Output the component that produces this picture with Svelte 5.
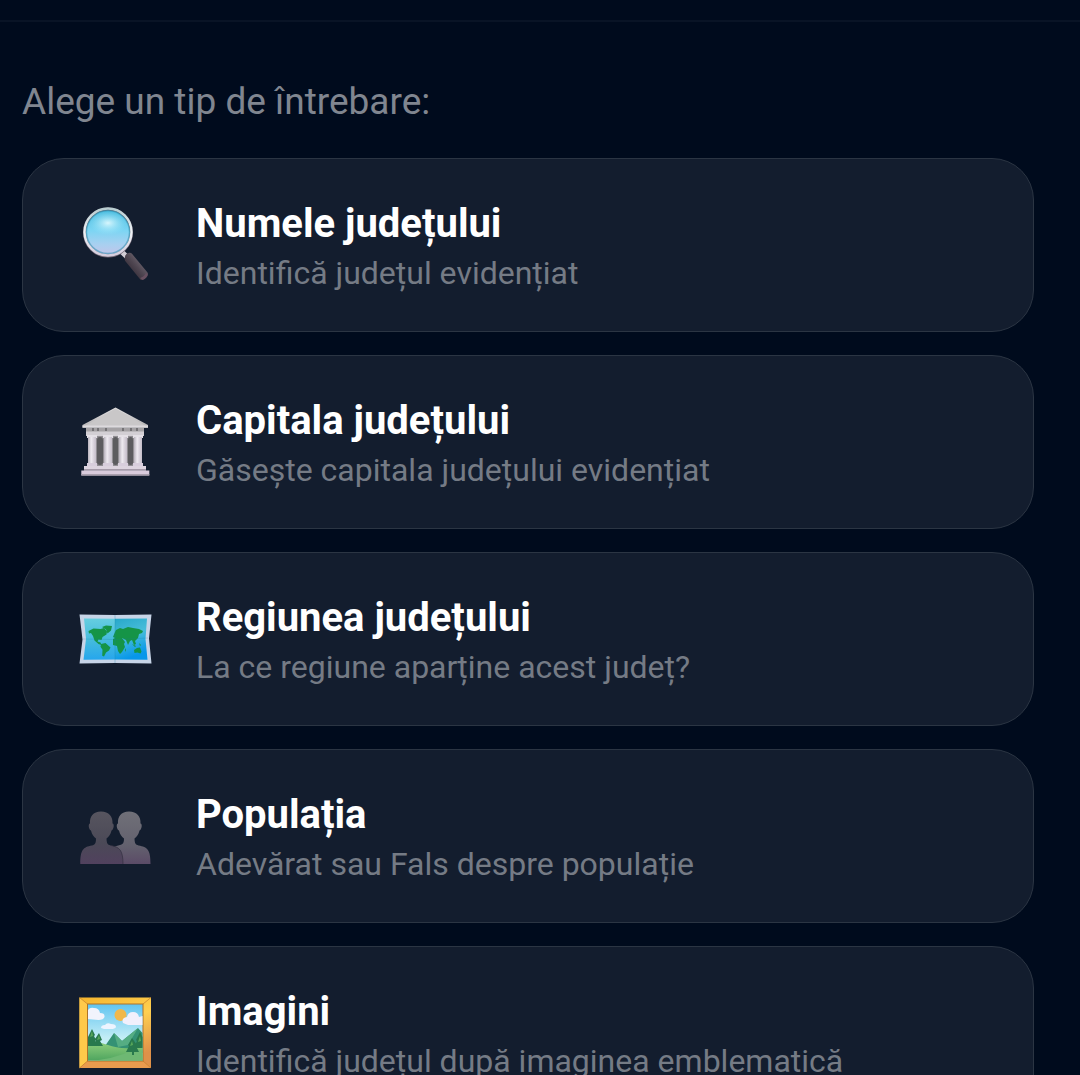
<script>
    // Question types, in the order they are offered
    const questionTypes = [
        { id: 'name', title: 'Numele județului', hint: 'Identifică județul evidențiat' },
        { id: 'capital', title: 'Capitala județului', hint: 'Găsește capitala județului evidențiat' },
        { id: 'region', title: 'Regiunea județului', hint: 'La ce regiune aparține acest județ?' },
        { id: 'population', title: 'Populația', hint: 'Adevărat sau Fals despre populație' },
        { id: 'images', title: 'Imagini', hint: 'Identifică județul după imaginea emblematică' }
    ];

    let selected = $state(null);

    // Left edges of the museum columns
    const columns = [9, 25, 40, 55];
</script>

<svelte:head>
    <title>Alege un tip de întrebare</title>
</svelte:head>

<header class="top-bar"></header>

<main class="picker">
    <h1>Alege un tip de întrebare:</h1>

    <div class="options">
        {#each questionTypes as type (type.id)}
            <button class="option" type="button" onclick={() => (selected = type.id)}>
                <svg class="icon" viewBox="0 0 72 72" aria-hidden="true">
                    {#if type.id === 'name'}
                        <defs>
                            <linearGradient id="lens" x1="0" y1="0" x2="0" y2="1">
                                <stop offset="0" stop-color="#45b9dc" />
                                <stop offset="0.45" stop-color="#7bd5f3" />
                                <stop offset="0.75" stop-color="#a8d0f0" />
                                <stop offset="1" stop-color="#c6c3e8" />
                            </linearGradient>
                            <radialGradient id="shine">
                                <stop offset="0" stop-color="#e4fbff" stop-opacity="0.9" />
                                <stop offset="1" stop-color="#9be6fa" stop-opacity="0" />
                            </radialGradient>
                            <linearGradient id="rim" x1="0" y1="0" x2="0" y2="1">
                                <stop offset="0" stop-color="#b9cdd0" />
                                <stop offset="0.5" stop-color="#eef3f7" />
                                <stop offset="1" stop-color="#d5cddd" />
                            </linearGradient>
                            <linearGradient id="handle" x1="0" y1="1" x2="1" y2="0">
                                <stop offset="0.2" stop-color="#302833" />
                                <stop offset="0.5" stop-color="#4f4651" />
                                <stop offset="0.8" stop-color="#746c76" />
                            </linearGradient>
                        </defs>
                        <path d="M43 43l5 5" stroke="#d1ccd4" stroke-width="5" />
                        <path d="M46 48q0-3 4-4.200q2-.3 3 1L68.500 63.500q1.500 2.500-1.500 5.300t-5.500 2L47 53q-2-2-1-5z" fill="url(#handle)" />
                        <path d="M61 69q4-1 6-5l1.500 1q0 4-5 6z" fill="#685061" />
                        <circle cx="29" cy="23.500" r="23.500" fill="url(#lens)" stroke="#746977" stroke-width="3" />
                        <circle cx="29" cy="23" r="23.500" fill="none" stroke="url(#rim)" stroke-width="2.400" />
                        <circle cx="29" cy="23" r="21.500" fill="none" stroke="#2b8ba9" stroke-opacity="0.55" stroke-width="1.300" />
                        <ellipse cx="29" cy="14" rx="19" ry="12" fill="url(#shine)" />
                    {:else if type.id === 'capital'}
                        <defs>
                            <linearGradient id="roof" x1="0" y1="0" x2="0" y2="1">
                                <stop offset="0" stop-color="#e1dfe0" />
                                <stop offset="1" stop-color="#b5b3b4" />
                            </linearGradient>
                            <linearGradient id="column">
                                <stop offset="0" stop-color="#b8b2bc" />
                                <stop offset="0.4" stop-color="#eeeaf0" />
                                <stop offset="1" stop-color="#c5bdc9" />
                            </linearGradient>
                        </defs>
                        <path d="M9 29h54v31H9z" fill="#918e93" />
                        <g fill="#5d5c5f">
                            <rect x="18" y="31" width="6" height="28" rx="3" />
                            <rect x="34" y="31" width="5" height="28" rx="2.500" />
                            <rect x="49" y="31" width="5" height="28" rx="2.500" />
                        </g>
                        <path d="M36.500 1.500L69 19v2.500H3.500V19z" fill="url(#roof)" />
                        <path d="M36.500 2.500L67 20H6z" fill="#c9c7c8" />
                        <path d="M3.500 19.500h65.500v2.300H3.500z" fill="#dddadd" />
                        <path d="M7 22h58v4H7z" fill="#a5a2a5" />
                        <path d="M13 22h2v3h-2zM18 22h2v3h-2zM26 22h2v3h-2zM43 22h2v3h-2zM51 22h2v3h-2zM57 22h2v3h-2z" fill="#747275" />
                        <path d="M7 25.500h58V30H7z" fill="#d3cfd4" />
                        {#each columns as x}
                            <rect x={x - 1} y="29" width="10" height="3" fill="#e4e0e6" />
                            <rect {x} y="31" width="8" height="27" fill="url(#column)" />
                            <rect x={x - 1} y="57" width="10" height="3" fill="#d8cedc" />
                        {/each}
                        <path d="M5 60h62v4.500H5z" fill="#ddd4df" />
                        <path d="M5 63h62v1.500H5z" fill="#a69ba9" />
                        <path d="M2.300 64.500h68v5h-68z" fill="#d9cbdc" />
                        <path d="M2.300 68h68v1.500h-68z" fill="#aaa0ae" />
                    {:else if type.id === 'region'}
                        <defs>
                            <linearGradient id="sea-left" x1="0" y1="0" x2="0" y2="1">
                                <stop offset="0" stop-color="#66cee0" />
                                <stop offset="0.55" stop-color="#43badd" />
                                <stop offset="1" stop-color="#26a6ed" />
                            </linearGradient>
                            <linearGradient id="sea-right" x1="0" y1="0" x2="0.3" y2="1">
                                <stop offset="0" stop-color="#27a8ca" />
                                <stop offset="0.5" stop-color="#48bdda" />
                                <stop offset="1" stop-color="#0797ea" />
                            </linearGradient>
                        </defs>
                        <g transform="translate(0 -2)">
                            <path d="M.5 13.500L36 14l36.500-.5-2.500 24 2.500 25-36.500-.5-35.500.5 3-24z" fill="#c7d4e7" />
                            <path d="M5 17.500l31 .3V58.500l-31.500.2L7 38z" fill="url(#sea-left)" />
                            <path d="M36 17.800l32-.3L66.500 38l2 20.700-32.500-.2z" fill="url(#sea-right)" />
                            <g fill="#159447">
                                <path d="M9.500 30l5-2.500 7 .5 3.500-1 3 3.500-.5 3-4 2.500-1 3-3-.5-1 2 3 1 1 2.500-3-1-4-3.500-1.500-4.500-2-3-2 .5z" />
                                <path d="M22 43l4.500-1 5 4.500-1.500 3-3 2-2 4-1.800-.8.3-6-2-3z" />
                                <path d="M23 26l4-1.500 6 .5-1 4.500-3.500 3-1.500-4z" />
                                <path d="M36 31l1-2 4-2 3 1 5-2 5 1 6 1 4 2-1 2-3 1-1 4-3 3 1 3-2 1-2-5-2 1-2 4-2-5-4-2-2 2-2-2-3 0-2-1z" />
                                <path d="M34 38l4-2 5 1 3 4-1 2 1 3-3 5-2 2-2-3-1-5-4-1z" />
                                <path d="M55 49l3-2 3-.5 1.500 4-1 2-3-1-3 .5zM53 43l4 2-1 1zM60 42l2 2-1 1zM46 47l1 2-1 2z" />
                            </g>
                            <path d="M4 38l32 .5L69 37" fill="none" stroke="#18789c" stroke-opacity="0.2" />
                            <path d="M36 14v48" stroke="#147fa6" stroke-opacity="0.3" />
                        </g>
                    {:else if type.id === 'population'}
                        <defs>
                            <linearGradient id="person-back" x1="0" y1="0" x2="0" y2="1">
                                <stop offset="0" stop-color="#707078" />
                                <stop offset="0.65" stop-color="#63616e" />
                                <stop offset="1" stop-color="#5b4b67" />
                            </linearGradient>
                            <linearGradient id="person-front" x1="0" y1="0" x2="0" y2="1">
                                <stop offset="0" stop-color="#57555f" />
                                <stop offset="0.6" stop-color="#4b4957" />
                                <stop offset="1" stop-color="#51415e" />
                            </linearGradient>
                        </defs>
                        <path d="M50 11.500c8 0 12 5 11.500 12 2 0 1.500 6-1 7-1 4-2.500 6-5 8 .2 5 1 6 4 7 9 1.500 12 4 12 18.500H33V49q2-3 8-4c3-.8 4-2 4-6.500-2.500-2-4-4-5-8-2.500-1-3-7-1-7-.5-7 3-12 11-12z" fill="url(#person-back)" />
                        <path d="M22 11.500c8 0 12 5 11.500 12 2 0 1.500 6-1 7-1 4-2.500 6-5 8 .2 5 1 6 4 7 9 1.500 12.500 4 12.500 18.500H1.300C1.300 50 4 47 13 45.500c3-.8 4-2 4-7-2.500-2-4-4-5-8-2.500-1-3-7-1-7-.5-7 3-12 11-12z" fill="url(#person-front)" />
                        <path d="M32 45.500c8.500 1.700 12 4.500 12 18.500" fill="none" stroke="#302c3d" stroke-opacity="0.65" />
                    {:else}
                        <defs>
                            <linearGradient id="frame" x1="0" y1="0" x2="0.4" y2="1">
                                <stop offset="0" stop-color="#f5b52d" />
                                <stop offset="0.5" stop-color="#ffcf50" />
                                <stop offset="1" stop-color="#df9149" />
                            </linearGradient>
                            <linearGradient id="sky" x1="0" y1="0" x2="0" y2="1">
                                <stop offset="0" stop-color="#62c5f0" />
                                <stop offset="0.6" stop-color="#c3edf6" />
                            </linearGradient>
                            <linearGradient id="meadow" x1="0" y1="0" x2="0" y2="1">
                                <stop offset="0" stop-color="#8dce7b" />
                                <stop offset="1" stop-color="#4fa55f" />
                            </linearGradient>
                        </defs>
                        <rect x=".5" y=".5" width="71.500" height="70.500" fill="url(#frame)" />
                        <path d="M.5.5L8.500 7v57L.5 71z" fill="#ffc94a" />
                        <path d="M.5 71l8-7H64l8 7z" fill="#e99b4e" />
                        <path d="M.5.5l8 6.500M72 .5L64 7M.5 71l8-7M72 71l-8-7" stroke="#c6802d" stroke-width=".7" />
                        <rect x="8" y="6.500" width="56.500" height="58" fill="#ad732a" />
                        <rect x="9" y="7.500" width="54.500" height="56" fill="url(#sky)" />
                        <circle cx="41.500" cy="18" r="6" fill="#f0b84b" />
                        <path d="M9 22v-9q2-3 6-2 5 0 6 5 5 0 4.500 4-1 3-6 3z" fill="#f1f3fc" />
                        <path d="M22 31q0-3 4-3 2-3 6-1 5 0 5 3-1 2-5 2h-7z" fill="#edf4ff" />
                        <path d="M44 26q-2-5 4-6 1-5 6-5 5 0 6 5l3.500-1v9H49z" fill="#f1f0fc" />
                        <path d="M26 49l9-13 8 8 16-13 4.500 5v20H27z" fill="#349174" />
                        <path d="M35 36l8 8 16-13-10 17-10 2z" fill="#55ad83" />
                        <path d="M9 46q10-2 20 2 12 5 34.500 2v13.500H9z" fill="url(#meadow)" />
                        <path d="M9 63.500q24 0 48-12l6.500 3v9z" fill="#6eb873" />
                        <g fill="#28794d">
                            <path d="M13 32l-4 8v9h9l-2-5 1-1-2-4 1-1zM20 36l-4 6 1 1-3 6h10l-3-5 2-1z" />
                            <path d="M53 41l-4 7 1 1-3 6h6v3h2v-3h5l-3-6 1-1zM61 35l-4 8 1 1-3 7h8.500V40z" />
                        </g>
                        <path d="M13 34l-2 6 3-1zM20 38l-2 5 3-1zM53 44l-2 5 3-1zM61 39l-2 6 3-1z" fill="#58a75a" />
                    {/if}
                </svg>
                <span class="labels">
                    <span class="title">{type.title}</span>
                    <span class="hint">{type.hint}</span>
                </span>
            </button>
        {/each}
    </div>
</main>

<style>
    :global(body) {
        background: #000b1d;
        font-family: Roboto, sans-serif;
    }

    .top-bar {
        height: 20px;
        border-bottom: 2px solid #091426;
    }

    .picker {
        padding: 56px 46px 24px 22px;
    }

    h1 {
        margin: 0 0 32px;
        color: #808690;
        font-size: 37px;
        font-weight: 400;
        line-height: 48px;
    }

    .options {
        display: flex;
        flex-direction: column;
        gap: 23px;
    }

    .option {
        display: flex;
        align-items: center;
        gap: 45px;
        width: 100%;
        padding: 37px 56px;
        border: 1px solid #2b3543;
        border-radius: 42px;
        background: #131d2e;
        color: #ffffff;
        font-family: inherit;
        text-align: left;
        cursor: pointer;
    }

    .icon {
        flex: none;
        width: 72px;
        height: 72px;
        overflow: visible;
    }

    .labels {
        display: flex;
        flex-direction: column;
    }

    .title {
        font-size: 40px;
        font-weight: 700;
        line-height: 56px;
    }

    .hint {
        color: #757b85;
        font-size: 32px;
        line-height: 42px;
    }
</style>
